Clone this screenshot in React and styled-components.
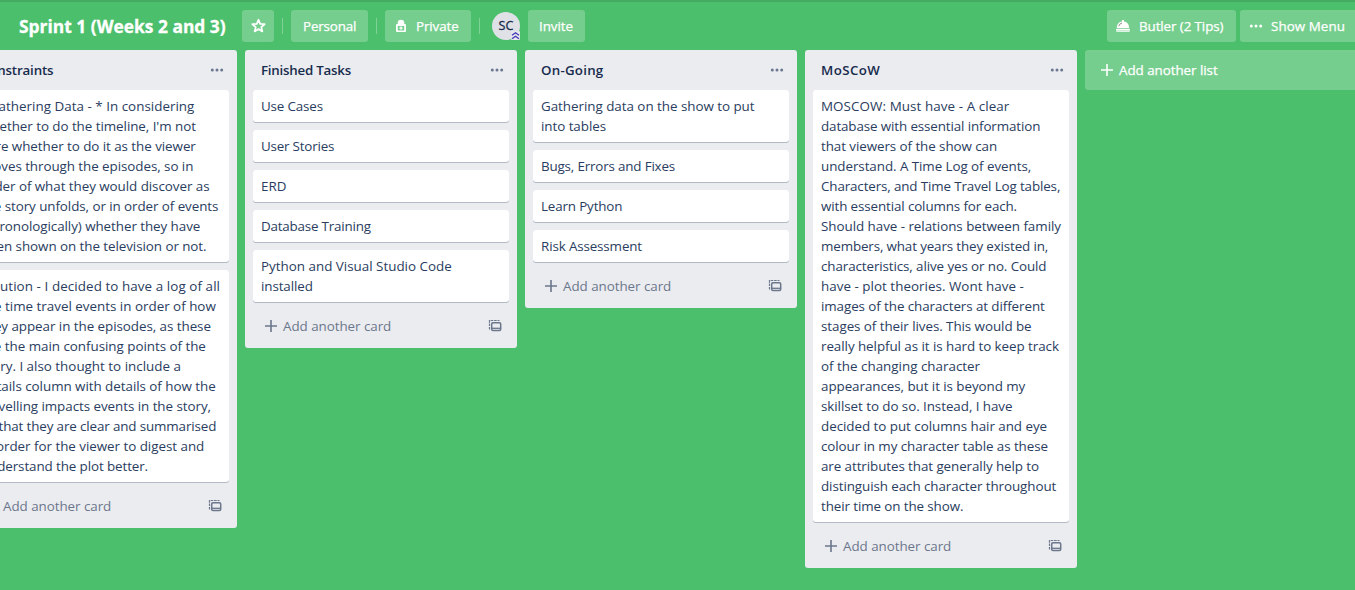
import React from "react";
import styled, { createGlobalStyle } from "styled-components";

const GlobalStyle = createGlobalStyle`
  * { box-sizing: border-box; }
  html, body { margin: 0; overflow: hidden; }
  body {
    background: #4bbf6b;
    color: #2a3d60;
    font: 400 13.4px/20px "Open Sans", "Noto Sans", sans-serif;
  }
`;

const Page = styled.div`
  height: 590px;
  overflow: hidden;
  border-top: 2px solid #44ac61;
`;

const Header = styled.header`
  display: flex;
  align-items: center;
  height: 48px;
  padding: 8px 0 8px 19px;
  color: #fff;
`;

const Title = styled.h1`
  margin: 0 16px 0 0;
  width: 207px;
  font-size: 17.4px;
  font-weight: 700;
  -webkit-text-stroke: 0.3px #fff;
  white-space: nowrap;
`;

const HeaderButton = styled.button`
  display: flex;
  align-items: center;
  flex: none;
  width: ${(p) => p.$width}px;
  height: 32px;
  padding: 0 0 0 ${(p) => p.$inset ?? 12}px;
  border: 0;
  border-radius: ${(p) => (p.$flush ? "3px 0 0 3px" : "3px")};
  background: rgba(255, 255, 255, 0.24);
  color: #fff;
  font: inherit;
  -webkit-text-stroke: 0.25px #fff;
  letter-spacing: ${(p) => p.$tracking ?? 0}px;
  white-space: nowrap;
  svg { flex: none; margin-right: ${(p) => p.$gap ?? 0}px; }
`;

const Divider = styled.span`
  width: 1px;
  height: 16px;
  margin: 0 8px;
  background: rgba(255, 255, 255, 0.3);
`;

const Avatar = styled.span`
  position: relative;
  display: flex;
  align-items: center;
  justify-content: center;
  width: 28px;
  height: 28px;
  margin: 0 8px 0 4px;
  border-radius: 50%;
  background: #dfe1e6;
  color: #172b4d;
  font-size: 12.6px;
  -webkit-text-stroke: 0.3px #172b4d;
  svg { position: absolute; right: 0; bottom: 0; }
`;

const Spacer = styled.span`
  flex: 1;
`;

const RightTools = styled.div`
  display: flex;
  gap: 4px;
`;

const Board = styled.main`
  display: flex;
  align-items: flex-start;
  gap: 8px;
  width: 1500px;
  margin-left: -35px;
`;

const List = styled.section`
  flex: none;
  width: 272px;
  padding: 0 8px;
  border-radius: 3px;
  background: #ebecf0;
`;

const ListHeader = styled.div`
  display: flex;
  align-items: center;
  justify-content: space-between;
  height: 40px;
  padding: 0 5px 0 8px;
  color: #6b778c;
`;

const ListTitle = styled.h2`
  margin: 0;
  color: #172b4d;
  font-size: 13.3px;
  font-weight: 600;
  letter-spacing: ${(p) => p.$tracking ?? 0}px;
`;

const Card = styled.article`
  margin-bottom: 8px;
  padding: 6px 0 6px 8px;
  border-radius: 3px;
  background: #fff;
  box-shadow: 0 1px 0 rgba(9, 30, 66, 0.25);
`;

const CardLine = styled.div`
  height: 20px;
  white-space: nowrap;
  letter-spacing: ${(p) => p.$tracking ?? 0}px;
`;

const AddCard = styled.div`
  display: flex;
  align-items: center;
  height: 38px;
  padding: 0 7px 6px 11px;
  color: #6b778c;
  letter-spacing: -0.05px;
  span { flex: 1; margin-left: 5px; }
`;

const AddList = styled.div`
  display: flex;
  align-items: center;
  gap: 5px;
  width: 272px;
  height: 40px;
  padding-left: 15px;
  border-radius: 3px;
  background: rgba(255, 255, 255, 0.24);
  color: #fff;
  letter-spacing: -0.05px;
  -webkit-text-stroke: 0.25px #fff;
`;

const Star = () => (
  <svg width="16" height="16" viewBox="0 0 16 16" fill="none" stroke="currentColor" strokeWidth="1.8" strokeLinejoin="round">
    <path d="M8.500 1.800l1.700 4.100 4.400.3-3.300 2.900 1 4.300-3.800-2.300-3.800 2.300 1-4.300L2.400 6.200l4.400-.3z" />
  </svg>
);

const Lock = () => (
  <svg width="12" height="14" viewBox="0 0 12 14">
    <path d="M3.500 5.500V4a2.500 2.500 0 0 1 5 0v1.500z" fill="currentColor" stroke="currentColor" strokeWidth="1.600" />
    <path fillRule="evenodd" fill="currentColor" d="M2 5h8a1 1 0 0 1 1 1v6a1 1 0 0 1-1 1H2a1 1 0 0 1-1-1V6a1 1 0 0 1 1-1zm.8 2v4.500h6.400V7z" />
    <path d="M6 7.600v3.200M4.300 9.200h3.400" stroke="currentColor" strokeWidth="1.300" />
  </svg>
);

const Bell = () => (
  <svg width="16" height="14" viewBox="0 0 16 14">
    <path fill="currentColor" d="M7 2.500V1h2v1.500c3 .4 5 2.500 5.300 6.700H1.700C2 5 4 2.900 7 2.500zM1 10h14v1.300H1z" />
    <path fill="currentColor" opacity=".75" d="M1.300 11.300h13.400v1.700H1.300z" />
    <path d="M3.800 7.200C4.300 5.300 5.500 4.400 7 4" stroke="#8a8f8c" strokeWidth="1" fill="none" />
  </svg>
);

const Dots = () => (
  <svg width="14" height="4" viewBox="0 0 14 4" fill="currentColor">
    <circle cx="2.300" cy="2" r="1.500" /><circle cx="7" cy="2" r="1.500" /><circle cx="11.700" cy="2" r="1.500" />
  </svg>
);

const Plus = () => (
  <svg width="14" height="14" viewBox="0 0 14 14" stroke="currentColor" strokeWidth="1.600">
    <path d="M7 1v12M1 7h12" />
  </svg>
);

const Template = () => (
  <svg width="14" height="14" viewBox="0 0 14 14" fill="none" stroke="currentColor">
    <path d="M1.500 10.500V1.500H11.500" strokeWidth="1.200" strokeDasharray="2.600 .8" />
    <rect x="3.700" y="3.700" width="9" height="7.800" rx="1.200" strokeWidth="1.500" />
    <path d="M4 9.300h8.500" strokeWidth="1.300" />
  </svg>
);

const AdminBadge = () => (
  <svg width="9" height="9" viewBox="0 0 9 9">
    <rect width="9" height="9" rx="1" fill="#e6e7ec" />
    <path d="M1 4.300L4.500 1.700 8 4.300M1 7.800L4.500 5.200 8 7.800" fill="none" stroke="#4338b8" strokeWidth="1.300" />
  </svg>
);

/* Each card is a list of [line, letter spacing in px]. */
const lists = [
  {
    title: "Constraints",
    tracking: -0.15,
    cards: [
      [["- Gathering Data - * In considering", 0.02], ["whether to do the timeline, I'm not", -0.05], ["sure whether to do it as the viewer", -0.05], ["moves through the episodes, so in", -0.06], ["order of what they would discover as", -0.05], ["the story unfolds, or in order of events", -0.07], ["(chronologically) whether they have", -0.06], ["been shown on the television or not.", -0.06]],
      [["Solution - I decided to have a log of all", 0.08], ["the time travel events in order of how", 0], ["they appear in the episodes, as these", -0.05], ["are the main confusing points of the", -0.03], ["story. I also thought to include a", 0], ["details column with details of how the", -0.04], ["travelling impacts events in the story,", -0.05], ["so that they are clear and summarised", -0.13], ["in order for the viewer to digest and", -0.03], ["understand the plot better.", -0.1]],
    ],
  },
  {
    title: "Finished Tasks",
    tracking: -0.22,
    cards: [[["Use Cases", -0.15]], [["User Stories", -0.2]], [["ERD", 0]], [["Database Training", -0.2]], [["Python and Visual Studio Code", 0], ["installed", -0.1]]],
  },
  {
    title: "On-Going",
    tracking: 0.25,
    cards: [[["Gathering data on the show to put", -0.03], ["into tables", -0.05]], [["Bugs, Errors and Fixes", -0.17]], [["Learn Python", -0.15]], [["Risk Assessment", -0.13]]],
  },
  {
    title: "MoSCoW",
    tracking: 0.4,
    cards: [[["MOSCOW: Must have - A clear", 0.08], ["database with essential information", -0.12], ["that viewers of the show can", -0.07], ["understand. A Time Log of events,", -0.06], ["Characters, and Time Travel Log tables,", -0.13], ["with essential columns for each.", -0.12], ["Should have - relations between family", -0.04], ["members, what years they existed in,", -0.14], ["characteristics, alive yes or no. Could", -0.1], ["have - plot theories. Wont have -", 0.03], ["images of the characters at different", -0.08], ["stages of their lives. This would be", -0.06], ["really helpful as it is hard to keep track", -0.06], ["of the changing character", 0], ["appearances, but it is beyond my", -0.06], ["skillset to do so. Instead, I have", -0.06], ["decided to put columns hair and eye", -0.04], ["colour in my character table as these", -0.08], ["are attributes that generally help to", -0.08], ["distinguish each character throughout", -0.08], ["their time on the show.", -0.1]]],
  },
];

export default function App() {
  return (
    <Page>
      <GlobalStyle />
      <Header>
        <Title>Sprint 1 (Weeks 2 and 3)</Title>
        <HeaderButton $width={32} $inset={8} aria-label="Star"><Star /></HeaderButton>
        <Divider />
        <HeaderButton $width={77} $tracking={-0.15}>Personal</HeaderButton>
        <Divider />
        <HeaderButton $width={86} $inset={10} $gap={9} $tracking={-0.1}><Lock />Private</HeaderButton>
        <Divider />
        <Avatar>SC<AdminBadge /></Avatar>
        <HeaderButton $width={57} $inset={11} $tracking={-0.05}>Invite</HeaderButton>
        <Spacer />
        <RightTools>
          <HeaderButton $width={129} $inset={8} $gap={8} $tracking={-0.1}><Bell />Butler (2 Tips)</HeaderButton>
          <HeaderButton $width={115} $inset={9} $gap={8} $tracking={0.05} $flush><Dots />Show Menu</HeaderButton>
        </RightTools>
      </Header>
      <Board>
        {lists.map((list) => (
          <List key={list.title}>
            <ListHeader><ListTitle $tracking={list.tracking}>{list.title}</ListTitle><Dots /></ListHeader>
            {list.cards.map((lines) => (
              <Card key={lines[0][0]}>
                {lines.map(([line, tracking]) => <CardLine key={line} $tracking={tracking}>{line}</CardLine>)}
              </Card>
            ))}
            <AddCard><Plus /><span>Add another card</span><Template /></AddCard>
          </List>
        ))}
        <AddList><Plus />Add another list</AddList>
      </Board>
    </Page>
  );
}
